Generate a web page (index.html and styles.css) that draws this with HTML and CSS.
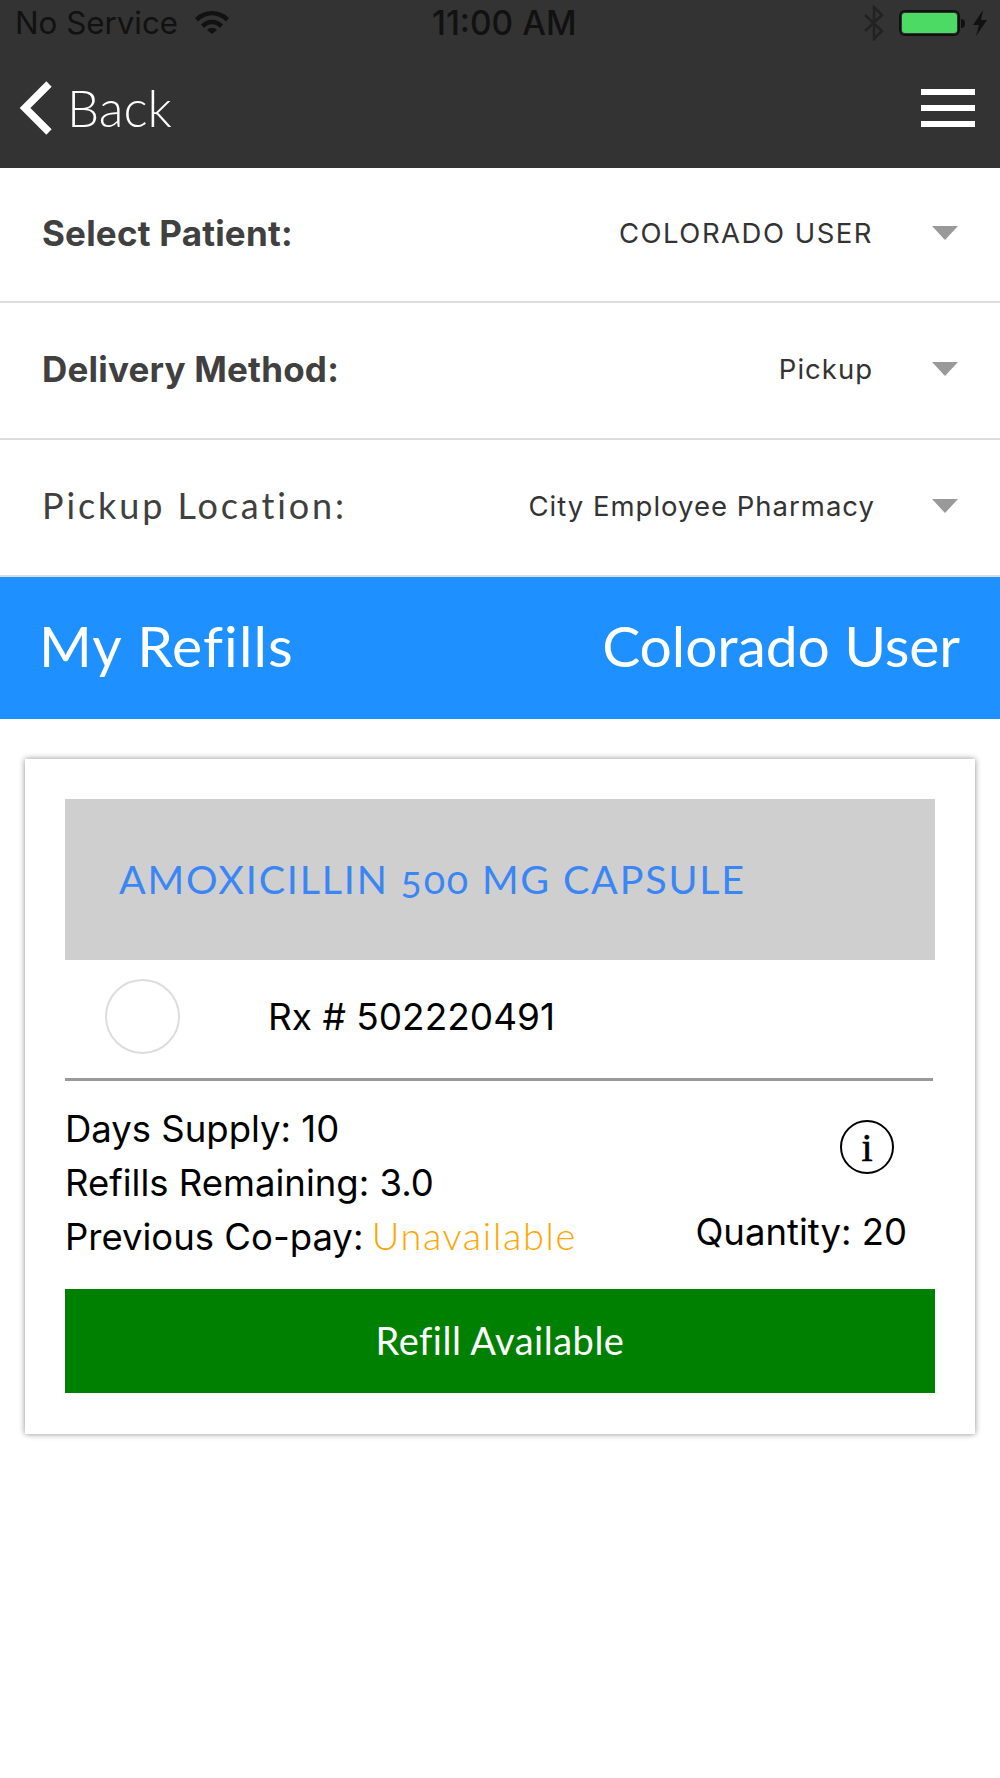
FILE: index.html
```html
<!DOCTYPE html>
<html lang="en">
<head>
<meta charset="utf-8">
<title>My Refills</title>
<link rel="stylesheet" href="styles.css">
</head>
<body>
<header class="top">
  <div class="status">
    <div class="status-left">
      <span>No Service</span>
      <svg class="wifi" viewBox="0 0 34 24" width="34" height="24"><path d="M0 8 A24 24 0 0 1 34 8 L31 11.500 A19 19 0 0 0 3 11.500Z M6 14.500 A15 15 0 0 1 28 14.500 L25 18 A10.500 10.500 0 0 0 9 18Z M12 20 A6.500 6.500 0 0 1 22 20 L17 24Z" fill="#111"/></svg>
    </div>
    <div class="status-time">11:00 AM</div>
    <div class="status-right">
      <svg class="bt" viewBox="0 0 22 36" width="22" height="36"><path d="M2 10 L19 26 L11 34 V2 L19 10 L2 26" fill="none" stroke="#222" stroke-width="2.500"/></svg>
      <span class="battery"><span class="battery-fill"></span></span>
      <span class="battery-nub"></span>
      <svg class="bolt" viewBox="0 0 16 26" width="16" height="26"><path d="M11 0 L1 15 H7 L4 26 L15 10 H9Z" fill="#111"/></svg>
    </div>
  </div>
  <nav class="nav">
    <div class="back">
      <svg viewBox="0 0 36 54" width="36" height="54"><path d="M31 3 L7 27 L31 51" fill="none" stroke="#fff" stroke-width="7.500"/></svg>
      <span class="back-text">Back</span>
    </div>
    <div class="burger"><i></i><i></i><i></i></div>
  </nav>
</header>

<section class="row">
  <span class="row-label strong">Select Patient:</span>
  <span class="row-value caps">COLORADO USER</span>
  <span class="caret"></span>
</section>
<section class="row">
  <span class="row-label strong">Delivery Method:</span>
  <span class="row-value">Pickup</span>
  <span class="caret"></span>
</section>
<section class="row">
  <span class="row-label light">Pickup Location:</span>
  <span class="row-value wide">City Employee Pharmacy</span>
  <span class="caret"></span>
</section>

<div class="banner">
  <span class="banner-title">My Refills</span>
  <span class="banner-user">Colorado User</span>
</div>

<article class="card">
  <div class="drug"><span>AMOXICILLIN 500 MG CAPSULE</span></div>
  <div class="rx">
    <span class="radio"></span>
    <span class="rx-num">Rx # 502220491</span>
  </div>
  <div class="details">
    <div class="facts">
      <div>Days Supply: 10</div>
      <div>Refills Remaining: 3.0</div>
      <div>Previous Co-pay: <span class="warn">Unavailable</span></div>
    </div>
    <div class="qty">
      <span class="info">i</span>
      <span>Quantity: 20</span>
    </div>
  </div>
  <div class="refill">Refill Available</div>
</article>
</body>
</html>
```
FILE: styles.css
```css
* { box-sizing: border-box; }
html, body { margin: 0; padding: 0; background: #fff; }
body { width: 1000px; height: 1778px; overflow: hidden; font-family: Inter, Roboto, sans-serif; color: #000; }

.top { height: 168px; background: #333; display: flex; flex-direction: column; }
.status { height: 46px; display: flex; align-items: center; position: relative; padding: 0 12px 0 15px; color: #111; }
.status-left { display: flex; align-items: center; gap: 17px; flex: 1; font-size: 31.300px; }
.wifi { margin-top: -2px; }
.status-time { font-weight: 500; font-size: 33.500px; position: absolute; left: 432px; }
.status-right { display: flex; align-items: center; }
.bt { margin-right: 14px; }
.battery { width: 61px; height: 26px; border: 2px solid #111; border-radius: 6px; padding: 1px; display: block; }
.battery-fill { display: block; height: 100%; background: #4cd964; border-radius: 3px; }
.battery-nub { width: 4px; height: 9px; background: #111; border-radius: 0 4px 4px 0; margin-left: 1px; margin-right: 7px; }

.nav { flex: 1; display: flex; justify-content: space-between; align-items: center; padding: 4px 25px 2px 18px; }
.back { display: flex; align-items: center; gap: 13px; color: #fff; font-family: Lato, sans-serif; font-weight: 300; font-size: 51px; }
.back-text { padding-bottom: 2px; }
.burger { display: flex; flex-direction: column; gap: 10px; width: 54px; }
.burger i { display: block; height: 6px; background: #fff; }

.row { height: 137px; padding: 0 42px 4px 42px; border-bottom: 2px solid #ddd; display: flex; align-items: center; color: #404040; }
.row:nth-of-type(1) { height: 135px; }
.row-label { flex: 1; font-size: 35px; }
.strong { font-weight: 700; letter-spacing: .2px; }
.light { font-family: Lato, sans-serif; font-weight: 400; letter-spacing: 2.900px; font-size: 36px; padding-bottom: 2px; }
.row-value { font-size: 27.500px; letter-spacing: 1px; color: #333; margin-right: 59px; }
.caps { letter-spacing: 1.500px; }
.wide { margin-right: 57px; }
.caret { width: 0; height: 0; border-left: 13px solid transparent; border-right: 13px solid transparent; border-top: 14px solid #999; }

.banner { height: 142px; background: #1e90ff; color: #fff; display: flex; justify-content: space-between; align-items: center; padding: 0 40px 6px 39px; font-family: Lato, sans-serif; font-weight: 400; font-size: 57px; font-variant-ligatures: none; }
.banner-title { letter-spacing: 1.100px; }
.banner-user { letter-spacing: -.1px; }

.card { width: 950px; height: 675px; margin: 40px 25px 0; padding: 40px 40px 0; background: #fff; box-shadow: 0 0 6px rgba(0,0,0,.45); display: flex; flex-direction: column; }
.drug { height: 161px; flex: none; background: #cfcfcf; color: #3a86f5; display: flex; align-items: center; padding: 0 0 3px 54px; font-family: Lato, sans-serif; font-size: 39.500px; letter-spacing: 1.800px; font-variant-numeric: oldstyle-nums; }
.rx { height: 121px; flex: none; display: flex; align-items: center; border-bottom: 3px solid #999; padding: 0 0 6px 40px; margin-right: 2px; }
.radio { width: 75px; height: 75px; border: 2.500px solid #ddd; border-radius: 50%; }
.rx-num { margin-left: 88px; font-size: 37px; }
.details { display: flex; justify-content: space-between; height: 208px; flex: none; font-size: 36.500px; }
.facts { padding-top: 21px; line-height: 54px; }
.warn { color: #ffa500; font-family: Lato, sans-serif; font-weight: 300; font-size: 38px; line-height: 0; letter-spacing: 1.600px; margin-left: -2px; }
.qty { display: flex; flex-direction: column; align-items: center; padding-right: 28px; padding-top: 39px; gap: 36px; }
.info { width: 54px; height: 54px; border: 2px solid #000; border-radius: 50%; display: flex; align-items: center; justify-content: center; font-family: "Liberation Serif", serif; font-size: 40px; font-weight: 400; -webkit-text-stroke: .6px #000; align-self: flex-end; margin-right: 13px; }
.refill { height: 104px; flex: none; background: #008000; color: #fff; display: flex; align-items: center; justify-content: center; padding-bottom: 3px; font-family: Lato, sans-serif; font-size: 38px; letter-spacing: .5px; }
```
